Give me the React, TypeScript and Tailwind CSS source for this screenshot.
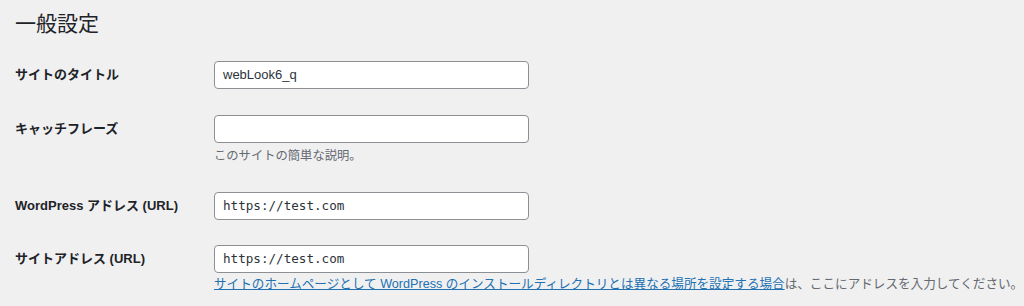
import React from "react";

const sans = "font-['Liberation_Sans','Noto_Sans_CJK_JP',sans-serif]";

function Row({ label, value, mono, children, pb = "pb-[13px]" }: { label: string; value: string; mono?: boolean; children?: React.ReactNode; pb?: string }) {
  return (
    <div className={`flex pt-[13px] ${pb}`}>
      <div className="w-[214px] shrink-0 h-[28px] flex items-center text-[13px] font-bold text-[#1d2327] pl-[15px]">{label}</div>
      <div className="flex flex-col">
        <div
          className={`w-[315px] h-[28px] bg-white border border-[#8c8f94] rounded-[4px] flex items-center px-[8px] text-[#2c3338] ${
            mono ? "font-['DejaVu_Sans_Mono',monospace] text-[12.6px]" : "text-[13px]"
          }`}
        >
          {value}
        </div>
        {children}
      </div>
    </div>
  );
}

export default function App() {
  return (
    <div className={`w-[1024px] h-[306px] bg-[#f0f0f1] overflow-hidden ${sans}`}>
      <h1 className="h-[48px] flex items-center pl-[15px] text-[21px] text-[#1d2327] font-normal">一般設定</h1>
      <Row label="サイトのタイトル" value="webLook6_q" />
      <Row label="キャッチフレーズ" value="">
        <p className="mt-[3px] leading-[20px] text-[12.3px] text-[#646970]">このサイトの簡単な説明。</p>
      </Row>
      <Row label="WordPress アドレス (URL)" value="https://test.com" mono pb="pb-[12px]" />
      <Row label="サイトアドレス (URL)" value="https://test.com" mono>
        <p className="mt-[1px] leading-[20px] text-[12.6px] text-[#646970] whitespace-nowrap">
          <a className="text-[#2271b1] underline">サイトのホームページとして WordPress のインストールディレクトリとは異なる場所を設定する場合</a>
          は、ここにアドレスを入力してください。
        </p>
      </Row>
    </div>
  );
}
